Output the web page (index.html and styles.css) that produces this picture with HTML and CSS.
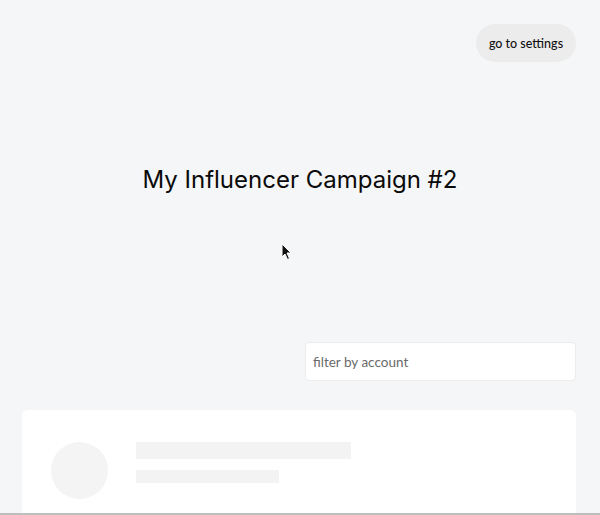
FILE: index.html
```html
<!DOCTYPE html>
<html>
<head>
<meta charset="utf-8">
<link rel="stylesheet" href="styles.css">
</head>
<body>
<div class="page">
  <header class="topbar">
    <button class="settings-btn">go to settings</button>
  </header>
  <h1 class="title">My Influencer Campaign #2</h1>
  <div class="filter-row">
    <input class="filter" type="text" placeholder="filter by account">
  </div>
  <section class="card">
    <div class="avatar"></div>
    <div class="lines">
      <div class="line line-long"></div>
      <div class="line line-short"></div>
    </div>
  </section>
</div>
<svg class="cursor" width="12" height="18" viewBox="0 0 12 18"><path d="M1 1 L1 14 L4 11 L6.5 16.5 L8.5 15.5 L6 10 L10 10 Z" fill="#111" stroke="#fff" stroke-width="1"/></svg>
<div class="bottom-edge"></div>
</body>
</html>
```
FILE: styles.css
```css
html, body {
  margin: 0;
  padding: 0;
  height: 100%;
  overflow: hidden;
}
body {
  background: #f5f6f7;
  font-family: Inter, "Liberation Sans", sans-serif;
  color: #111;
}
.page {
  padding: 0 24px 0 22px;
}
.topbar {
  display: flex;
  justify-content: flex-end;
  padding-top: 24px;
}
.settings-btn {
  width: 100px;
  height: 38px;
  border: none;
  border-radius: 19px;
  background: #ececec;
  font-family: Lato, sans-serif;
  font-size: 12.5px;
  font-weight: 500;
  color: #111;
  padding: 0;
}
.title {
  margin: 100px 0 0;
  text-align: center;
  font-size: 24px;
  font-weight: 400;
  line-height: 36px;
  color: #0a0a0a;
  padding-left: 2px;
}
.filter-row {
  display: flex;
  justify-content: flex-end;
  margin-top: 144px;
}
.filter {
  box-sizing: border-box;
  width: 271px;
  height: 39px;
  border: 1px solid #ececec;
  border-radius: 4px;
  background: #fff;
  padding: 0 7px;
  font-family: Lato, sans-serif;
  font-size: 13.5px;
  color: #666;
  outline: none;
}
.filter::placeholder {
  color: #6a6a6a;
}
.card {
  margin-top: 29px;
  background: #fff;
  border-radius: 6px 6px 0 0;
  height: 105px;
  display: flex;
  gap: 28px;
  padding: 32px 29px 0;
  box-sizing: border-box;
}
.avatar {
  width: 57px;
  height: 57px;
  border-radius: 50%;
  background: #f4f4f4;
  flex: none;
}
.lines {
  display: flex;
  flex-direction: column;
  gap: 11px;
}
.line {
  background: #f3f3f3;
}
.line-long {
  width: 215px;
  height: 17px;
}
.line-short {
  width: 143px;
  height: 13px;
}
.cursor {
  position: absolute;
  left: 281px;
  top: 243px;
}
.bottom-edge {
  position: absolute;
  left: 0;
  right: 0;
  bottom: 0;
  height: 2px;
  background: #bdbdbd;
}
```
